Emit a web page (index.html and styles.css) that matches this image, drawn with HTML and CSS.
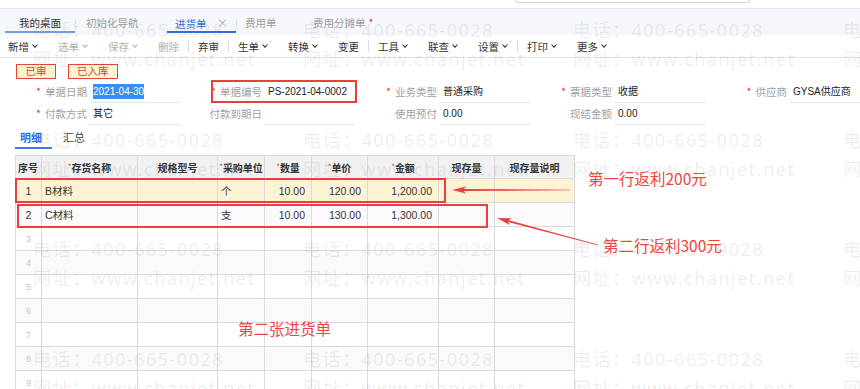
FILE: index.html
```html
<!DOCTYPE html>
<html lang="zh">
<head>
<meta charset="utf-8">
<title>进货单</title>
<link rel="stylesheet" href="styles.css">
</head>
<body>
<div class="page">
  <div class="topstrip"><div class="search"></div></div>
  <div class="tabbar">
    <div class="tab tab-home">我的桌面</div>
    <span class="tsep"></span>
    <div class="tab tab-guide">初始化导航</div>
    <div class="tab tab-cur">进货单<span class="close">×</span></div>
    <span class="tsep"></span>
    <div class="tab tab-fee">费用单</div>
    <div class="tab tab-alloc">费用分摊单<span class="dot">*</span></div>
  </div>
  <div class="toolbar">
    <span class="tb">新增<svg class="chev" viewBox="0 0 6 4"><path d="M0.5 0.5 3 3.2 5.5 0.5"/></svg></span>
    <span class="tb dis">选单<svg class="chev" viewBox="0 0 6 4"><path d="M0.5 0.5 3 3.2 5.5 0.5"/></svg></span>
    <span class="tb dis">保存<svg class="chev" viewBox="0 0 6 4"><path d="M0.5 0.5 3 3.2 5.5 0.5"/></svg></span>
    <span class="tb dis">删除</span>
    <span class="sep"></span>
    <span class="tb">弃审</span>
    <span class="sep"></span>
    <span class="tb">生单<svg class="chev" viewBox="0 0 6 4"><path d="M0.5 0.5 3 3.2 5.5 0.5"/></svg></span>
    <span class="tb">转换<svg class="chev" viewBox="0 0 6 4"><path d="M0.5 0.5 3 3.2 5.5 0.5"/></svg></span>
    <span class="tb">变更</span>
    <span class="sep"></span>
    <span class="tb">工具<svg class="chev" viewBox="0 0 6 4"><path d="M0.5 0.5 3 3.2 5.5 0.5"/></svg></span>
    <span class="tb">联查<svg class="chev" viewBox="0 0 6 4"><path d="M0.5 0.5 3 3.2 5.5 0.5"/></svg></span>
    <span class="tb">设置<svg class="chev" viewBox="0 0 6 4"><path d="M0.5 0.5 3 3.2 5.5 0.5"/></svg></span>
    <span class="sep"></span>
    <span class="tb">打印<svg class="chev" viewBox="0 0 6 4"><path d="M0.5 0.5 3 3.2 5.5 0.5"/></svg></span>
    <span class="tb">更多<svg class="chev" viewBox="0 0 6 4"><path d="M0.5 0.5 3 3.2 5.5 0.5"/></svg></span>
  </div>

  <div class="form">
    <div class="badges">
      <span class="badge">已审</span>
      <span class="badge">已入库</span>
    </div>
    <div class="fields">
      <div class="lbl"><i>*</i>单据日期</div>
      <div class="val"><span class="sel">2021-04-30</span></div>
      <div class="lbl"><i>*</i>单据编号</div>
      <div class="val">PS-2021-04-0002</div>
      <div class="lbl"><i>*</i>业务类型</div>
      <div class="val">普通采购</div>
      <div class="lbl"><i>*</i>票据类型</div>
      <div class="val">收据</div>
      <div class="lbl"><i>*</i>供应商</div>
      <div class="val">GYSA供应商</div>

      <div class="lbl"><i>*</i>付款方式</div>
      <div class="val">其它</div>
      <div class="lbl">付款到期日</div>
      <div class="val"></div>
      <div class="lbl">使用预付</div>
      <div class="val">0.00</div>
      <div class="lbl">现结金额</div>
      <div class="val">0.00</div>
      <div class="lbl"></div>
      <div class="val none"></div>
    </div>
  </div>

  <div class="subtabs">
    <span class="st on">明细</span>
    <span class="st">汇总</span>
  </div>

  <table class="grid">
    <colgroup>
      <col style="width:26px"><col style="width:96px"><col style="width:80px"><col style="width:47px"><col style="width:47px"><col style="width:56px"><col style="width:71px"><col style="width:56px"><col style="width:80px">
    </colgroup>
    <thead>
      <tr>
        <th class="h-no">序号</th>
        <th><i>*</i>存货名称</th>
        <th>规格型号</th>
        <th><i>*</i>采购单位</th>
        <th><i>*</i>数量</th>
        <th><i>*</i>单价</th>
        <th><i>*</i>金额</th>
        <th>现存量</th>
        <th>现存量说明</th>
      </tr>
    </thead>
    <tbody>
      <tr class="r-sel"><td class="no">1</td><td>B材料</td><td></td><td>个</td><td class="num">10.00</td><td class="num">120.00</td><td class="num">1,200.00</td><td></td><td></td></tr>
      <tr class="r-alt"><td class="no">2</td><td>C材料</td><td></td><td>支</td><td class="num">10.00</td><td class="num">130.00</td><td class="num">1,300.00</td><td></td><td></td></tr>
      <tr><td class="no empty">3</td><td></td><td></td><td></td><td></td><td></td><td></td><td></td><td></td></tr>
      <tr class="r-alt"><td class="no empty">4</td><td></td><td></td><td></td><td></td><td></td><td></td><td></td><td></td></tr>
      <tr><td class="no empty">5</td><td></td><td></td><td></td><td></td><td></td><td></td><td></td><td></td></tr>
      <tr class="r-alt"><td class="no empty">6</td><td></td><td></td><td></td><td></td><td></td><td></td><td></td><td></td></tr>
      <tr><td class="no empty">7</td><td></td><td></td><td></td><td></td><td></td><td></td><td></td><td></td></tr>
      <tr class="r-alt"><td class="no empty">8</td><td></td><td></td><td></td><td></td><td></td><td></td><td></td><td></td></tr>
      <tr><td class="no empty">9</td><td></td><td></td><td></td><td></td><td></td><td></td><td></td><td></td></tr>
    </tbody>
  </table>

  <div class="watermark">
    <div class="wm"><div>电话：400-665-0028</div><div>网址：www.chanjet.net</div></div>
    <div class="wm"><div>电话：400-665-0028</div><div>网址：www.chanjet.net</div></div>
    <div class="wm"><div>电话：400-665-0028</div><div>网址：www.chanjet.net</div></div>
    <div class="wm"><div>电话：400-665-0028</div><div>网址：www.chanjet.net</div></div>
    <div class="wm"><div>电话：400-665-0028</div><div>网址：www.chanjet.net</div></div>
    <div class="wm"><div>电话：400-665-0028</div><div>网址：www.chanjet.net</div></div>
    <div class="wm"><div>电话：400-665-0028</div><div>网址：www.chanjet.net</div></div>
    <div class="wm"><div>电话：400-665-0028</div><div>网址：www.chanjet.net</div></div>
    <div class="wm"><div>电话：400-665-0028</div><div>网址：www.chanjet.net</div></div>
    <div class="wm"><div>电话：400-665-0028</div><div>网址：www.chanjet.net</div></div>
    <div class="wm"><div>电话：400-665-0028</div><div>网址：www.chanjet.net</div></div>
    <div class="wm"><div>电话：400-665-0028</div><div>网址：www.chanjet.net</div></div>
    <div class="wm"><div>电话：400-665-0028</div><div>网址：www.chanjet.net</div></div>
    <div class="wm"><div>电话：400-665-0028</div><div>网址：www.chanjet.net</div></div>
    <div class="wm"><div>电话：400-665-0028</div><div>网址：www.chanjet.net</div></div>
    <div class="wm"><div>电话：400-665-0028</div><div>网址：www.chanjet.net</div></div>
  </div>

  <div class="mark mark-no"></div>
  <div class="mark mark-r1"></div>
  <div class="mark mark-r2"></div>
  <svg class="arrows" width="860" height="389" viewBox="0 0 860 389">
    <g transform="translate(452,190)">
      <polygon points="0,0 14,-3.6 11,0 14,3.6"/>
      <polygon points="10,-1 118,-0.35 118,0.35 10,1"/>
    </g>
    <g transform="translate(497,218) rotate(15)">
      <polygon points="0,0 14,-3.6 11,0 14,3.6"/>
      <polygon points="10,-1 105,-0.35 105,0.35 10,1"/>
    </g>
  </svg>
  <div class="note note1">第一行返利200元</div>
  <div class="note note2">第二行返利300元</div>
  <div class="note note3">第二张进货单</div>
</div>
</body>
</html>
```

FILE: styles.css
```css
* { box-sizing: border-box; }
html, body { margin: 0; padding: 0; background: #fff; }
body {
  font-family: "Liberation Sans", "Noto Sans CJK SC", sans-serif;
  font-size: 10.5px;
  color: #333;
}
.page {
  position: relative;
  width: 860px;
  height: 389px;
  overflow: hidden;
}

/* top strip */
.topstrip { height: 8px; overflow: hidden; }
.search {
  margin-left: 515px;
  width: 235px;
  height: 3px;
  border: 1px solid #d4d4d4;
  border-top: none;
  border-radius: 0 0 4px 4px;
}

/* tabs */
.tabbar {
  height: 27px;
  border-top: 1px solid #e6e8ee;
  background: #f5f7fb;
  display: flex;
  align-items: flex-start;
  font-family: "Noto Sans CJK SC", sans-serif;
}
.tab {
  height: 24px;
  padding-top: 6px;
  line-height: 16px;
  border-bottom: 2px solid transparent;
  color: #a0a0a0;
  white-space: nowrap;
}
.tab-home { margin-left: 5px; width: 70px; text-align: center; color: #333; border-bottom-color: #6aa2ea; }
.tab-guide { width: 91px; padding-left: 10px; }
.tab-cur { width: 69px; padding-left: 8px; color: #2c6fdc; border-bottom-color: #2c6fdc; }
.tab-cur .close { color: #b0b0b0; margin-left: 10px; font-size: 12px; }
.tab-fee { width: 63px; padding-left: 8px; }
.tab-alloc { padding-left: 13px; }
.tab-alloc .dot { color: #e0393a; margin-left: 3px; }
.tsep { width: 1px; height: 13px; margin-top: 10px; background: #e2e4ea; }

/* toolbar */
.toolbar {
  height: 23px;
  border-bottom: 1px solid #e2e2e2;
  display: flex;
  align-items: center;
  gap: 20px;
  padding-left: 8px;
  font-family: "Noto Sans CJK SC", sans-serif;
  color: #333;
}
.tb { display: inline-flex; align-items: center; white-space: nowrap; }
.tb.dis { color: #b0b0b0; }
.chev {
  width: 6px; height: 4px;
  margin-left: 3px;
  fill: none;
  stroke: currentColor;
  stroke-width: 1.1;
}
.sep { width: 1px; height: 12px; background: #dcdcdc; margin: 0 -11px; }

/* form */
.form { font-family: "Noto Sans CJK SC", sans-serif; }
.badges { display: flex; gap: 12px; padding: 6px 0 0 16px; height: 23px; }
.badge {
  height: 15px;
  line-height: 12px;
  padding: 0 8px;
  border: 1.5px solid #e2453c;
  background: #fff4cf;
  color: #e0382f;
  font-size: 10.5px;
}
.badge:first-child { padding: 0 8.5px; }
.fields {
  display: grid;
  grid-template-columns: repeat(5, 85px 90px);
  grid-auto-rows: 22px;
  padding-left: 5px;
}
.lbl {
  text-align: right;
  padding-right: 3px;
  line-height: 22px;
  color: #a0a0a0;
  white-space: nowrap;
}
.lbl i { font-style: normal; color: #e0393a; margin-right: 4px; }
.val {
  border-bottom: 1px solid #e6e6e6;
  line-height: 21px;
  padding-left: 3px;
  color: #1a1a1a;
  white-space: nowrap;
  font-size: 10px;
  font-family: "Liberation Sans", "Noto Sans CJK SC", sans-serif;
}
.val.none { border-bottom: none; }
.sel { background: #3a8ef0; color: #fff; padding: 2px 0; }

/* sub tabs */
.subtabs {
  display: flex;
  height: 24px;
  margin-left: 15px;
  font-family: "Noto Sans CJK SC", sans-serif;
  font-size: 11px;
}
.st {
  padding: 4px 10px 0 5px;
  line-height: 16px;
  color: #444;
  border-bottom: 2px solid transparent;
}
.st.on { color: #2c6fdc; font-weight: bold; border-bottom-color: #3a7fe0; }
.st + .st { margin-left: 6px; }

/* table */
.grid {
  margin: 6px 0 0 15px;
  border-collapse: collapse;
  table-layout: fixed;
  width: 559px;
}
.grid th, .grid td {
  border: 1px solid #dadada;
  padding: 0 3px;
  white-space: nowrap;
  overflow: hidden;
}
.grid th {
  height: 23px;
  background: #f1f1f1;
  font-weight: bold;
  font-family: "Noto Sans CJK SC", sans-serif;
  font-size: 10px;
  color: #333;
  text-align: center;
  padding: 0 1px;
}
.grid th i { font-style: normal; color: #e0393a; font-weight: normal; vertical-align: 2px; font-size: 8px; }
.grid th.h-no { text-align: left; padding-left: 2px; }
.grid td { height: 24px; }
.grid tr.r-sel td { background: #fcf3d5; }
.grid tr.r-alt td { background: #fcf9fd; }
.grid td.no { text-align: center; padding: 0; }
.grid td.no.empty { color: #c4c4c4; font-size: 9px; }
.grid td.num { text-align: right; padding-right: 6px; }

/* watermark */
.watermark {
  position: absolute;
  left: 0; top: 0;
  width: 860px; height: 389px;
  padding: 16px 0 0 33px;
  display: grid;
  grid-template-columns: repeat(4, 270px);
  grid-auto-rows: 109.5px;
  pointer-events: none;
  font-family: "Noto Sans", "Noto Sans CJK SC", sans-serif;
  font-size: 18px;
  letter-spacing: 1.5px;
  color: rgba(110, 110, 110, 0.12);
  white-space: nowrap;
}
.wm div { line-height: 29px; }

/* annotations */
.mark { position: absolute; border: 2px solid #e8413d; pointer-events: none; }
.mark-no { left: 211px; top: 80px; width: 146px; height: 23px; }
.mark-r1 { left: 15px; top: 178px; width: 431px; height: 25px; }
.mark-r2 { left: 17px; top: 204px; width: 471px; height: 24px; }
.arrows { position: absolute; left: 0; top: 0; fill: #e8413d; pointer-events: none; }
.note {
  position: absolute;
  color: #ea4740;
  font-family: "Noto Sans CJK SC", sans-serif;
  font-size: 15.5px;
  line-height: 20px;
  white-space: nowrap;
}
.note1 { left: 588px; top: 168px; }
.note2 { left: 603px; top: 235px; }
.note3 { left: 238px; top: 318px; }
```
